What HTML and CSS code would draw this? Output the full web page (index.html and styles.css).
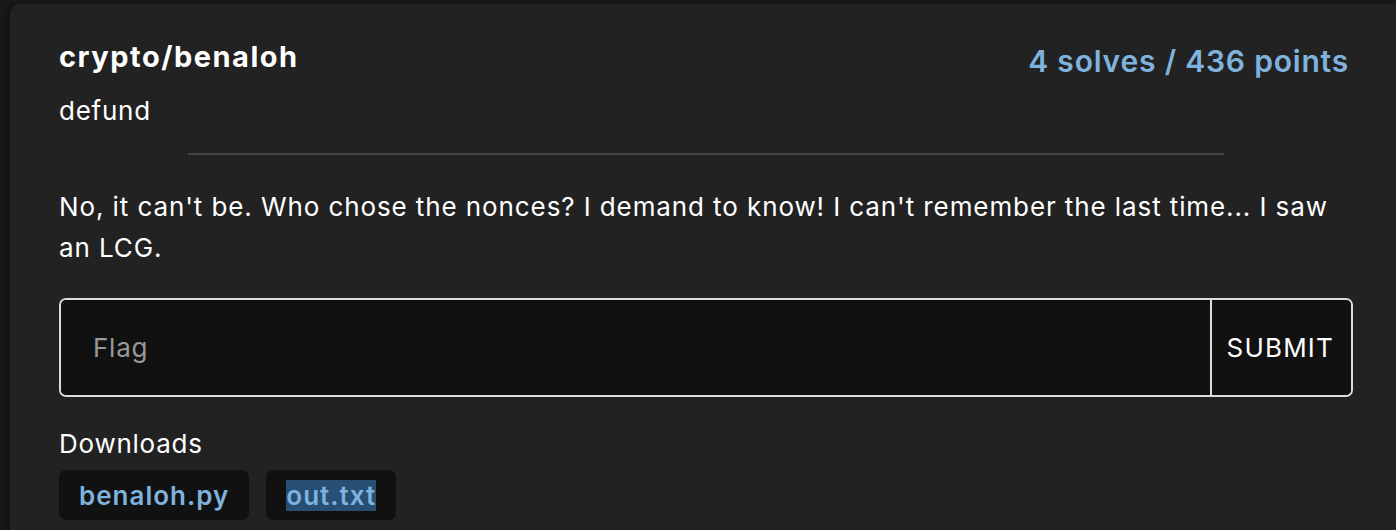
FILE: index.html
```html
<!DOCTYPE html>
<html>
<head>
<meta charset="utf-8">
<link rel="stylesheet" href="styles.css">
</head>
<body>
<div class="card">
  <div class="head">
    <div class="names">
      <div class="title">crypto/benaloh</div>
      <div class="author">defund</div>
    </div>
    <div class="points">4 solves / 436 points</div>
  </div>
  <hr class="divider">
  <p class="desc">No, it can't be. Who chose the nonces? I demand to know! I can't remember the last time... I saw an LCG.</p>
  <form class="flag-form">
    <input class="flag-input" type="text" placeholder="Flag">
    <button class="submit" type="button">SUBMIT</button>
  </form>
  <div class="dl-label">Downloads</div>
  <div class="downloads">
    <a class="file">benaloh.py</a>
    <a class="file"><span class="sel">out.txt</span></a>
  </div>
</div>
</body>
</html>
```
FILE: styles.css
```css
html, body {
  margin: 0;
  padding: 0;
  background: #1a1a1a;
  height: 100%;
  overflow: hidden;
}
body {
  font-family: Inter, "Noto Sans", sans-serif;
  color: #fff;
}
.card {
  margin: 4px 0 0 10px;
  width: 1392px;
  height: 600px;
  box-sizing: border-box;
  background: #222;
  border-radius: 10px;
  box-shadow: -4px 0 10px rgba(0,0,0,0.35);
  padding: 36px 49px 0 49px;
}
.head {
  display: flex;
  justify-content: space-between;
  align-items: flex-start;
}
.title {
  font-size: 29px;
  font-weight: 700;
  line-height: 34px;
  letter-spacing: 1.5px;
}
.author {
  font-size: 26px;
  line-height: 34px;
  letter-spacing: 0.75px;
  margin-top: 20px;
}
.points {
  font-size: 30px;
  font-weight: 600;
  color: #7fb2dd;
  line-height: 36px;
  letter-spacing: 0.8px;
  margin-top: 3px;
  margin-right: 4px;
}
.divider {
  width: 80%;
  margin: 25px auto 0;
  border: 0;
  height: 2px;
  background: #454545;
}
.desc {
  font-size: 26px;
  line-height: 41px;
  letter-spacing: 0.9px;
  margin: 31px 0 0;
}
.flag-form {
  display: flex;
  margin-top: 30px;
  height: 99px;
  box-sizing: border-box;
  border: 2px solid #dcdcdc;
  border-radius: 7px;
  background: #111;
  overflow: hidden;
}
.flag-input {
  flex: 1;
  min-width: 0;
  background: #111;
  border: 0;
  outline: none;
  padding: 0 32px;
  font-family: inherit;
  font-size: 26px;
  letter-spacing: 0.75px;
  color: #fff;
}
.flag-input::placeholder {
  color: #999;
}
.submit {
  background: #111;
  border: 0;
  border-left: 2px solid #dcdcdc;
  color: #fff;
  font-family: inherit;
  font-size: 26px;
  letter-spacing: 1.2px;
  padding: 0 17px 0 15px;
}
.dl-label {
  font-size: 26px;
  line-height: 34px;
  letter-spacing: 0.75px;
  margin-top: 30px;
}
.downloads {
  display: flex;
  gap: 17px;
  margin-top: 9px;
}
.file {
  background: #111;
  border-radius: 7px;
  color: #7fb2dd;
  font-size: 26px;
  font-weight: 600;
  letter-spacing: 1px;
  height: 50px;
  display: flex;
  align-items: center;
  padding: 0 20px;
}
.sel {
  background: #264f73;
}
```
